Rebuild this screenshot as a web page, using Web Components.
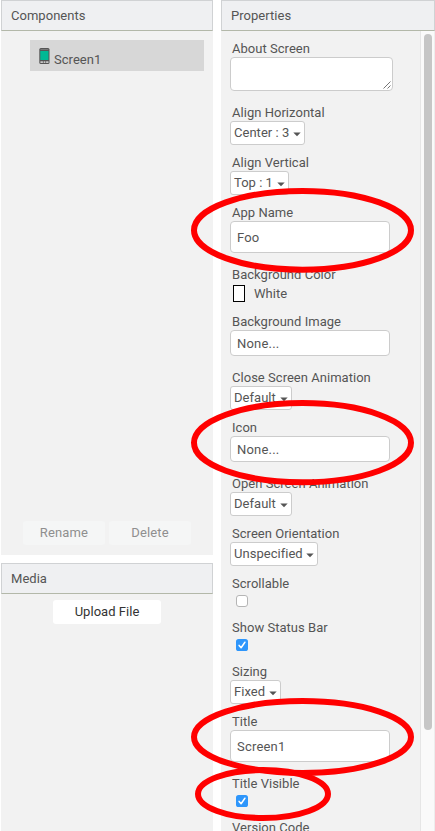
<!DOCTYPE html>
<html lang="en">
<head>
<meta charset="utf-8">
<title>Designer</title>
<style>
html, body { margin: 0; height: 831px; overflow: hidden; background: #fff; }
</style>
</head>
<body>
<designer-app></designer-app>
<script>
const define = (name, html) => {
  const t = document.createElement('template');
  t.innerHTML = html;
  customElements.define(name, class extends HTMLElement {
    constructor() {
      super();
      this.attachShadow({ mode: 'open' }).append(t.content.cloneNode(true));
    }
  });
};

define('side-panel', `
<style>
:host { display: flex; flex-direction: column; background: #f2f2f2; min-width: 0; box-sizing: border-box; }
header { flex: none; box-sizing: border-box; height: 31px; padding-left: 9px; border: 1px solid #d0d2d4; border-bottom-color: #b3b8a9; background: #eff0f2; line-height: 29px; white-space: nowrap; }
main { flex: 1; min-height: 0; display: flex; flex-direction: column; }
</style>
<header><slot name="title"></slot></header>
<main><slot></slot></main>`);

define('tree-item', `
<style>
:host { display: flex; align-items: flex-start; box-sizing: border-box; height: 31px; margin: 9px 9px 0 29px; padding: 8px 0 0 9px; background: #d7d7d7; gap: 4px; }
svg { display: block; }
span { padding-top: 3px; line-height: 18px; }
</style>
<svg width="11" height="17" viewBox="0 0 11 17"><rect x=".3" y="0" width="10.2" height="16" rx="1.5" fill="#555"/><rect x="1.3" y="3" width="8.2" height="9" fill="#00b894"/><path d="M1.5 1.5h7.8" stroke="#888" stroke-width=".7"/><path d="M1.4 13.2h2.5v1.7H1.4zM4.6 13.2h1.8v1.7H4.6zM7.1 13.2h2.4v1.7H7.1z" fill="#c8c8c8"/></svg>
<span><slot></slot></span>`);

define('push-button', `
<style>
:host { display: block; flex: none; height: 24px; border-radius: 3px; background: #fff; color: #333; line-height: 24px; text-align: center; }
:host([disabled]) { background: #f5f6f6; color: #8f8f8f; letter-spacing: .15px; }
</style><slot></slot>`);

define('property-row', `
<style>
:host { display: flex; flex-direction: column; align-items: flex-start; flex: none; margin-bottom: 8px; }
.label { height: 18px; line-height: 20px; padding-left: 2px; white-space: nowrap; }
</style>
<span class="label"><slot name="label"></slot></span><slot></slot>`);

define('text-box', `
<style>
:host { display: block; box-sizing: border-box; width: 160px; height: 32px; margin-bottom: 4px; padding-left: 6px; border: 1px solid #ccc; border-radius: 4px; background: #fff; line-height: 31px; letter-spacing: .2px; }
:host([file]) { height: 26px; line-height: 25px; }
</style><slot></slot>`);

define('text-area', `
<style>
:host { display: flex; align-items: flex-end; justify-content: flex-end; box-sizing: border-box; width: 163px; height: 34px; margin-bottom: 4px; border: 1px solid #ccc; border-radius: 4px; background: #fff; }
svg { display: block; }
</style>
<svg width="9" height="9" viewBox="0 0 9 9"><path d="M.5 7.5l7-7M4.5 7.5l3-3" stroke="#666" stroke-width=".9"/></svg>`);

define('drop-down', `
<style>
:host { display: flex; align-items: center; box-sizing: border-box; height: 24px; padding: 0 3px; border: 1px solid #ccc; border-radius: 3px; background: #fff; white-space: nowrap; justify-content: space-between; }
span { line-height: 22px; }
svg { display: block; margin-top: 3px; }
</style>
<span><slot></slot></span><svg width="8" height="5" viewBox="0 0 8 5"><path d="M.3 .5h7.4L4 4.3z" fill="#555"/></svg>`);

define('color-swatch', `
<style>
:host { display: flex; align-items: flex-start; height: 21px; gap: 9px; padding-left: 3px; }
i { box-sizing: border-box; width: 12px; height: 17px; margin-top: 3px; border: 1px solid #000; background: #fff; }
span { line-height: 20px; margin-top: 2px; }
i, span { margin-bottom: 0; }
</style><i></i><span><slot></slot></span>`);

define('check-box', `
<style>
:host { display: flex; padding: 3px 0 3px 6px; }
svg { display: block; }
.on { display: none; }
:host([checked]) .on { display: block; }
:host([checked]) .off { display: none; }
</style>
<svg class="off" width="12" height="12"><rect x=".5" y=".5" width="11" height="11" rx="2.5" fill="#fff" stroke="#b5b5b5"/></svg>
<svg class="on" width="12" height="12"><rect width="12" height="12" rx="2.6" fill="#2e96fb"/><path d="M3.1 6.4l2 2.3 3.8-5.5" fill="none" stroke="#fff" stroke-width="1.5" stroke-linecap="round" stroke-linejoin="round"/></svg>`);

define('red-rings', `
<style>
:host { position: absolute; inset: 0; pointer-events: none; }
svg { display: block; }
</style>
<svg width="435" height="831" fill="none" stroke="#f00" stroke-width="6"><ellipse cx="302.5" cy="230.3" rx="108.5" ry="39.4"/><ellipse cx="302.5" cy="442.7" rx="108.5" ry="39.6"/><ellipse cx="302.5" cy="737" rx="108.5" ry="36"/><ellipse cx="263" cy="794" rx="65" ry="24"/></svg>`);

define('designer-app', `
<style>
:host { display: grid; grid-template-columns: 212px 214px; gap: 8px; position: relative; box-sizing: border-box; width: 435px; height: 831px; padding-left: 1px; overflow: hidden; font: 13px/18px Roboto, "Liberation Sans", sans-serif; letter-spacing: .03px; color: #555; }
.left { display: grid; grid-template-rows: 555px 268px; gap: 8px; }
.actions { display: grid; grid-template-columns: 82px 82px; gap: 4px; margin: auto 0 10px 22px; }
.upload { width: 108px; margin: 6px auto 0 52px; }
.view { display: flex; flex: 1; min-height: 0; overflow: hidden; }
.props { flex: 1; display: flex; flex-direction: column; padding: 8px 0 0 9px; min-width: 0; }
.track { flex: none; width: 15px; box-sizing: border-box; border-left: 1px solid #e6e6e6; border-right: 1px solid #ededed; background: #fafafa; padding: 3px 0 0 3px; }
.thumb { width: 8px; height: 696px; border-radius: 4px; background: #c6c6c6; }
</style>
<div class="left">
<side-panel><span slot="title">Components</span>
<tree-item>Screen1</tree-item>
<div class="actions"><push-button disabled>Rename</push-button><push-button disabled>Delete</push-button></div>
</side-panel>
<side-panel><span slot="title">Media</span>
<push-button class="upload">Upload File</push-button>
</side-panel>
</div>
<side-panel><span slot="title">Properties</span>
<div class="view"><div class="props">
<property-row><span slot="label">About Screen</span><text-area></text-area></property-row>
<property-row><span slot="label">Align Horizontal</span><drop-down style="width:75px">Center : 3</drop-down></property-row>
<property-row><span slot="label">Align Vertical</span><drop-down style="width:59px">Top : 1</drop-down></property-row>
<property-row><span slot="label">App Name</span><text-box>Foo</text-box></property-row>
<property-row><span slot="label">Background Color</span><color-swatch style="margin-top:-1px;margin-bottom:1px">White</color-swatch></property-row>
<property-row><span slot="label">Background Image</span><text-box file>None...</text-box></property-row>
<property-row><span slot="label">Close Screen Animation</span><drop-down style="width:62px">Default</drop-down></property-row>
<property-row><span slot="label">Icon</span><text-box file>None...</text-box></property-row>
<property-row><span slot="label">Open Screen Animation</span><drop-down style="width:62px">Default</drop-down></property-row>
<property-row><span slot="label">Screen Orientation</span><drop-down style="width:88px">Unspecified</drop-down></property-row>
<property-row><span slot="label">Scrollable</span><check-box></check-box></property-row>
<property-row><span slot="label">Show Status Bar</span><check-box checked></check-box></property-row>
<property-row><span slot="label">Sizing</span><drop-down style="width:51px">Fixed</drop-down></property-row>
<property-row><span slot="label">Title</span><text-box>Screen1</text-box></property-row>
<property-row><span slot="label">Title Visible</span><check-box checked></check-box></property-row>
<property-row><span slot="label">Version Code</span></property-row>
</div><div class="track"><div class="thumb"></div></div></div>
</side-panel>
<red-rings></red-rings>`);
</script>
</body>
</html>
